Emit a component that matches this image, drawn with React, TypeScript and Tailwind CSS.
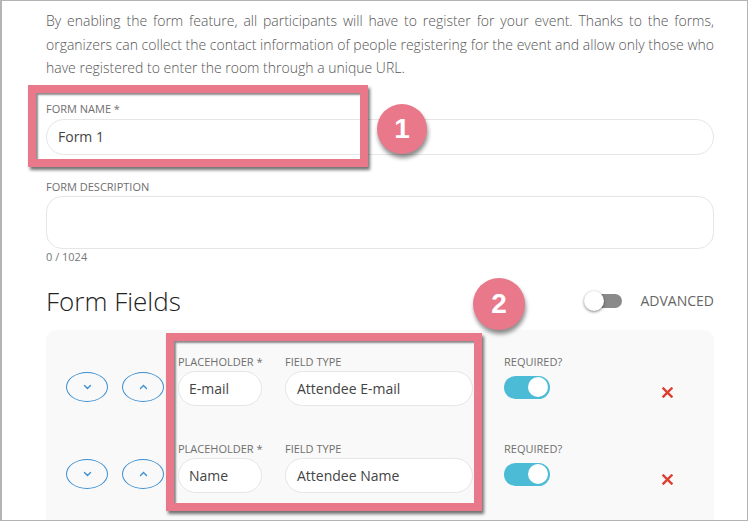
import React from "react";

const PINK = "bg-[#e8788a]";

function Label({ children }: { children: React.ReactNode }) {
  return <div className="whitespace-nowrap text-[11px] uppercase leading-[14px] text-[#6f6f6f]">{children}</div>;
}

function ChevronButton({ up }: { up?: boolean }) {
  return (
    <div className="flex h-[30px] w-[42px] items-center justify-center rounded-[50%] border border-[#3d8fd1]">
      <svg width="9" height="6" viewBox="0 0 9 6" fill="none" stroke="#3d8fd1" strokeWidth="1.4" strokeLinecap="round">
        {up ? <polyline points="1.5,4.5 4.5,1.5 7.5,4.5" /> : <polyline points="1.5,1.5 4.5,4.5 7.5,1.5" />}
      </svg>
    </div>
  );
}

function FieldRow({ placeholder, type }: { placeholder: string; type: string }) {
  return (
    <div className="flex items-start">
      <div className="flex gap-[14px] pt-[17px]">
        <ChevronButton />
        <ChevronButton up />
      </div>
      <div className="ml-[14px] w-[84px]">
        <Label>Placeholder *</Label>
        <div className="mt-[2px] flex h-[35px] items-center rounded-full border border-[#e6e6e6] bg-white px-[10px] text-[14px] text-[#444]">
          {placeholder}
        </div>
      </div>
      <div className="ml-[23px] w-[188px]">
        <Label>Field type</Label>
        <div className="mt-[2px] flex h-[35px] items-center rounded-full border border-[#e6e6e6] bg-white px-[11px] text-[14px] text-[#444]">
          {type}
        </div>
      </div>
      <div className="ml-[31px] w-[60px]">
        <Label>Required?</Label>
        <div className="mt-[7px] flex h-[23px] w-[46px] items-center justify-end rounded-full bg-[#4cbcd6] pr-[2px]">
          <div className="h-[20px] w-[20px] rounded-full bg-white" />
        </div>
      </div>
      <div className="ml-[98px] pt-[32px]">
        <svg width="11" height="11" viewBox="0 0 11 11" stroke="#dc3f32" strokeWidth="2.4" strokeLinecap="square">
          <line x1="1.5" y1="1.5" x2="9.5" y2="9.5" />
          <line x1="9.5" y1="1.5" x2="1.5" y2="9.5" />
        </svg>
      </div>
    </div>
  );
}

function Marker({ n, className }: { n: string; className: string }) {
  return (
    <div
      className={`absolute flex items-center justify-center rounded-full ${PINK} font-['Liberation_Sans',Arial,sans-serif] text-[28px] font-bold text-white shadow-[1px_4px_4px_rgba(0,0,0,0.45)] ${className}`}
    >
      {n}
    </div>
  );
}

export default function App() {
  return (
    <div className="relative h-[521px] w-[748px] overflow-hidden border border-l-2 border-[#b4b4b4] bg-white font-['Open_Sans',sans-serif]">
      <div className="pl-[44px] pr-[33px] pt-[8px]">
        <p className="text-justify text-[14px] font-light leading-[23.5px] text-[#555]">
          By enabling the form feature, all participants will have to register for your event. Thanks to the forms,
          organizers can collect the contact information of people registering for the event and allow only those who
          have registered to enter the room through a unique URL.
        </p>

        <div className="mt-[22px]">
          <Label>Form name *</Label>
          <div className="mt-[3px] flex h-[36px] items-center rounded-full border border-[#e6e6e6] px-[11px] text-[14px] text-[#444]">
            Form 1
          </div>
        </div>

        <div className="mt-[25px]">
          <Label>Form description</Label>
          <div className="mt-[2px] h-[53px] rounded-[16px] border border-[#e6e6e6]" />
          <div className="mt-[1px] text-[11px] leading-[14px] text-[#777]">0 / 1024</div>
        </div>

        <div className="mt-[21px] flex h-[32px] items-center justify-between">
          <h2 className="text-[26px] font-light leading-[32px] text-[#222]">Form Fields</h2>
          <div className="flex items-center">
            <div className="relative flex h-[20px] w-[38px] items-center">
              <div className="ml-[5px] h-[14px] w-[33px] rounded-full bg-[#8a8a8a]" />
              <div className="absolute left-0 top-0 h-[20px] w-[20px] rounded-full bg-white shadow-[0_1px_3px_rgba(0,0,0,0.5)]" />
            </div>
            <span className="ml-[18px] text-[14px] text-[#666]">ADVANCED</span>
          </div>
        </div>

        <div className="mt-[13px] h-[220px] rounded-[10px] bg-[#f9f9f9] pl-[20px] pt-[25px]">
          <FieldRow placeholder="E-mail" type="Attendee E-mail" />
          <div className="h-[36px]" />
          <FieldRow placeholder="Name" type="Attendee Name" />
        </div>
      </div>

      <div className="absolute left-[26px] top-[84px] h-[82px] w-[340px] border-[8px] border-[#e8788a] shadow-[2px_3px_3px_rgba(0,0,0,0.55),inset_2px_2px_2px_rgba(0,0,0,0.45)]" />
      <Marker n="1" className="left-[375px] top-[103px] h-[50px] w-[50px]" />

      <div className="absolute left-[164px] top-[332px] h-[178px] w-[316px] border-[8px] border-[#e8788a] shadow-[2px_3px_3px_rgba(0,0,0,0.55),inset_2px_2px_2px_rgba(0,0,0,0.45)]" />
      <Marker n="2" className="left-[471px] top-[277px] h-[52px] w-[52px]" />
    </div>
  );
}
